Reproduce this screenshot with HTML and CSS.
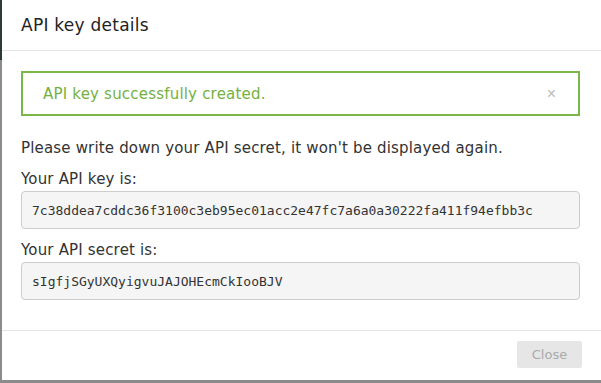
FILE: index.html
```html
<!DOCTYPE html>
<html lang="en">
<head>
    <meta charset="UTF-8">
    <meta name="viewport" content="width=device-width, initial-scale=1.0">
    <link rel="stylesheet" href="styles.css">
</head>
<body>
    <div class="backdrop">
        <div class="modal">
            <!-- Header -->
            <div class="modal-header">
                <h2>API key details</h2>
            </div>

            <!-- Body -->
            <div class="modal-body">
                <div class="alert">
                    <span>API key successfully created.</span>
                    <button type="button" class="alert-close">&times;</button>
                </div>

                <p class="note">Please write down your API secret, it won't be displayed again.</p>

                <label class="field-label">Your API key is:</label>
                <div class="code-box">7c38ddea7cddc36f3100c3eb95ec01acc2e47fc7a6a0a30222fa411f94efbb3c</div>

                <label class="field-label">Your API secret is:</label>
                <div class="code-box">sIgfjSGyUXQyigvuJAJOHEcmCkIooBJV</div>
            </div>

            <!-- Footer -->
            <div class="modal-footer">
                <button type="button" class="btn-close" disabled>Close</button>
            </div>
        </div>
    </div>
</body>
</html>
```

FILE: styles.css
```css
body {
    margin: 0;
    height: 383px;
    overflow: hidden;
    background: linear-gradient(#2b3b33 0, #2b3b33 60px, #8b8b8b 60px);
    font-family: 'DejaVu Sans', sans-serif;
}
.backdrop {
    height: 383px;
    padding-left: 2px;
    box-sizing: border-box;
}
.modal {
    width: 601px;
    height: 380px;
    background-color: #fff;
    display: flex;
    flex-direction: column;
}
.modal-header {
    height: 50px;
    border-bottom: 1px solid #e4e4e4;
    padding: 0 19px;
    display: flex;
    align-items: center;
}
.modal-header h2 {
    margin: 0;
    font-size: 17px;
    font-weight: 500;
    letter-spacing: 0.25px;
    color: #222;
}
.modal-body {
    padding: 20px 23px 30px 19px;
    border-bottom: 1px solid #e4e4e4;
}
.alert {
    height: 45px;
    box-sizing: border-box;
    border: 2px solid #7ab648;
    display: flex;
    align-items: center;
    justify-content: space-between;
    padding: 0 22px 0 20px;
    color: #74b13f;
    font-size: 15px;
    letter-spacing: 0.2px;
}
.alert-close {
    background: none;
    border: none;
    padding: 0;
    color: #bbb;
    font-size: 16px;
    cursor: pointer;
}
.note {
    margin: 22px 0 11px;
    font-size: 15px;
    letter-spacing: 0.17px;
    line-height: 20px;
    color: #333;
}
.field-label {
    display: block;
    font-size: 15px;
    letter-spacing: 0.17px;
    line-height: 20px;
    color: #333;
}
.code-box {
    height: 38px;
    box-sizing: border-box;
    margin: 2px 0 11px;
    padding: 0 10px;
    display: flex;
    align-items: center;
    background-color: #f5f5f5;
    border: 1px solid #ccc;
    border-radius: 4px;
    font-family: 'DejaVu Sans Mono', monospace;
    font-size: 13px;
    color: #333;
}
.code-box:last-child {
    margin-bottom: 0;
}
.modal-footer {
    flex: 1;
    display: flex;
    justify-content: flex-end;
    align-items: center;
    padding: 0 21px 2px;
}
.btn-close {
    width: 65px;
    height: 27px;
    padding: 0;
    border: none;
    border-radius: 2px;
    background-color: #e6e6e6;
    color: #aaa;
    font-family: 'DejaVu Sans', sans-serif;
    font-size: 13px;
}
```
